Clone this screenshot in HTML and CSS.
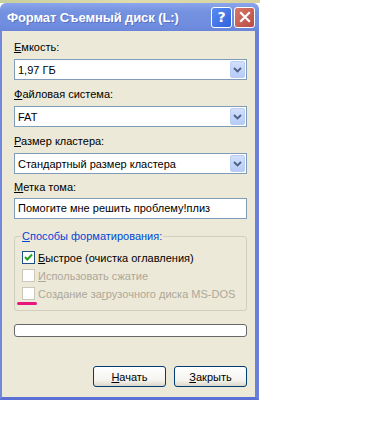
FILE: index.html
```html
<!DOCTYPE html>
<html lang="ru">
<head>
    <meta charset="UTF-8">
    <title>Формат Съемный диск (L:)</title>
    <link rel="stylesheet" href="styles.css">
</head>
<body>

    <div class="screen">
        <div class="desktop"></div>

        <div class="window">
            <div class="titlebar">
                <span class="title">Формат Съемный диск (L:)</span>
                <div class="title-buttons">
                    <span class="tb-btn help">?</span>
                    <span class="tb-btn close">
                        <svg width="12" height="12" viewBox="0 0 12 12">
                            <path d="M2 2 L10 10 M10 2 L2 10" stroke="#fff" stroke-width="2.2" stroke-linecap="square"/>
                        </svg>
                    </span>
                </div>
            </div>

            <div class="client">
                <div class="field-label first"><u>Е</u>мкость:</div>
                <div class="combo">
                    <span class="combo-text">1,97 ГБ</span>
                    <span class="drop">
                        <svg width="9" height="6" viewBox="0 0 9 6"><path d="M1 1 L4.5 4.5 L8 1" fill="none" stroke="#4d6185" stroke-width="1.8"/></svg>
                    </span>
                </div>

                <div class="field-label"><u>Ф</u>айловая система:</div>
                <div class="combo">
                    <span class="combo-text">FAT</span>
                    <span class="drop">
                        <svg width="9" height="6" viewBox="0 0 9 6"><path d="M1 1 L4.5 4.5 L8 1" fill="none" stroke="#4d6185" stroke-width="1.8"/></svg>
                    </span>
                </div>

                <div class="field-label"><u>Р</u>азмер кластера:</div>
                <div class="combo">
                    <span class="combo-text">Стандартный размер кластера</span>
                    <span class="drop">
                        <svg width="9" height="6" viewBox="0 0 9 6"><path d="M1 1 L4.5 4.5 L8 1" fill="none" stroke="#4d6185" stroke-width="1.8"/></svg>
                    </span>
                </div>

                <div class="field-label label-tight"><u>М</u>етка тома:</div>
                <div class="textbox">Помогите мне решить проблему!плиз</div>

                <fieldset class="group">
                    <legend><u>С</u>пособы форматирования:</legend>

                    <div class="check-row">
                        <span class="box checked">
                            <svg width="11" height="11" viewBox="0 0 11 11"><path d="M2 5 L4.3 7.5 L9 2.5" fill="none" stroke="#21a121" stroke-width="2"/></svg>
                        </span>
                        <span><u>Б</u>ыстрое (очистка оглавления)</span>
                    </div>
                    <div class="check-row disabled">
                        <span class="box"></span>
                        <span><u>И</u>спользовать сжатие</span>
                    </div>
                    <div class="check-row disabled">
                        <span class="box"></span>
                        <span>Создание за<u>г</u>рузочного диска MS-DOS</span>
                        <span class="mark"></span>
                    </div>
                </fieldset>

                <div class="progress"></div>

                <div class="actions">
                    <button><u>Н</u>ачать</button>
                    <button><u>З</u>акрыть</button>
                </div>
            </div>
        </div>
    </div>

</body>
</html>
```

FILE: styles.css
```css
body {
    margin: 0;
    background-color: #ffffff;
    font-family: "Liberation Sans", Arial, sans-serif;
    font-size: 11px;
    color: #000000;
}

.screen {
    width: 260px;
}

.desktop {
    height: 3px;
    background: linear-gradient(90deg, #c9cf9e, #e0dcae 50%, #d6d3a0);
}

.window {
    width: 259px;
}

/* title bar */
.titlebar {
    height: 28px;
    display: flex;
    align-items: center;
    justify-content: space-between;
    padding: 0 4px 0 7px;
    background: linear-gradient(#8ca6ec, #7592e0 30%, #6f8ddf 80%, #6a86d8);
    border-radius: 6px 6px 0 0;
    box-sizing: border-box;
}

.title {
    color: #ffffff;
    font-family: "Liberation Sans", Arial, sans-serif;
    font-weight: bold;
    font-size: 13px;
    letter-spacing: -0.1px;
    text-shadow: 1px 1px 0 #5a70c0;
}

.title-buttons {
    display: flex;
    gap: 2px;
}

.tb-btn {
    width: 19px;
    height: 19px;
    border: 1px solid #ffffff;
    border-radius: 3px;
    display: flex;
    align-items: center;
    justify-content: center;
    color: #ffffff;
    font-family: "DejaVu Sans", sans-serif;
    font-weight: bold;
    font-size: 14px;
}

.help {
    background: linear-gradient(135deg, #5b8cf2, #2f62dc);
}

.close {
    background: linear-gradient(135deg, #d8776a, #b94c44);
}

/* client area */
.client {
    background-color: #ece9d8;
    border-left: 2px solid #7088de;
    border-right: 4px solid #6a80dc;
    border-bottom: 3px solid #5b6fd4;
    padding: 10px 8px 10px 12px;
}

.field-label {
    line-height: 13px;
    margin-top: 8px;
}

.field-label.first {
    margin-top: 0;
}

.field-label.label-tight {
    margin-top: 7px;
}

.combo {
    margin-top: 5px;
    height: 21px;
    box-sizing: border-box;
    border: 1px solid #7f9db9;
    background-color: #ffffff;
    display: flex;
    align-items: center;
    justify-content: space-between;
    padding: 0 1px 0 3px;
}

.drop {
    width: 15px;
    height: 17px;
    border: 1px solid #bccdf4;
    border-radius: 2px;
    box-sizing: border-box;
    background: linear-gradient(#d2dffc, #b6cbf6);
    display: flex;
    align-items: center;
    justify-content: center;
}

.textbox {
    margin-top: 4px;
    height: 21px;
    box-sizing: border-box;
    border: 1px solid #7f9db9;
    background-color: #ffffff;
    padding: 0 3px;
    line-height: 19px;
}

/* group box */
.group {
    margin: 11px 0 0 0;
    padding: 0 0 10px 6px;
    border: 1px solid #d0d0bf;
    border-radius: 3px;
}

.group legend {
    padding: 0 1px;
    color: #0046d5;
    line-height: 13px;
}

.check-row {
    position: relative;
    display: flex;
    align-items: center;
    gap: 3px;
    height: 13px;
    margin-top: 5px;
    padding-left: 1px;
}

.check-row:first-of-type {
    margin-top: 8px;
}

.box {
    width: 13px;
    height: 13px;
    box-sizing: border-box;
    border: 1px solid #1c5180;
    background-color: #ffffff;
    display: flex;
    align-items: center;
    justify-content: center;
}

.check-row.disabled {
    color: #aca899;
}

.check-row.disabled .box {
    border-color: #cac8bb;
}

/* hand-drawn pink underline */
.mark {
    position: absolute;
    left: -4px;
    top: 15px;
    width: 20px;
    height: 3px;
    border-radius: 2px;
    background-color: #e8157c;
}

.progress {
    margin-top: 13px;
    height: 13px;
    box-sizing: border-box;
    border: 1px solid #686868;
    border-radius: 3px;
    background-color: #ffffff;
}

.actions {
    margin-top: 29px;
    display: flex;
    justify-content: flex-end;
    gap: 8px;
}

button {
    width: 73px;
    height: 21px;
    padding: 0;
    border: 1px solid #003c74;
    border-radius: 3px;
    background: linear-gradient(#ffffff, #f4f3ee 70%, #dcd8c8);
    font-family: "Liberation Sans", Arial, sans-serif;
    font-size: 11px;
    color: #000000;
}
```
